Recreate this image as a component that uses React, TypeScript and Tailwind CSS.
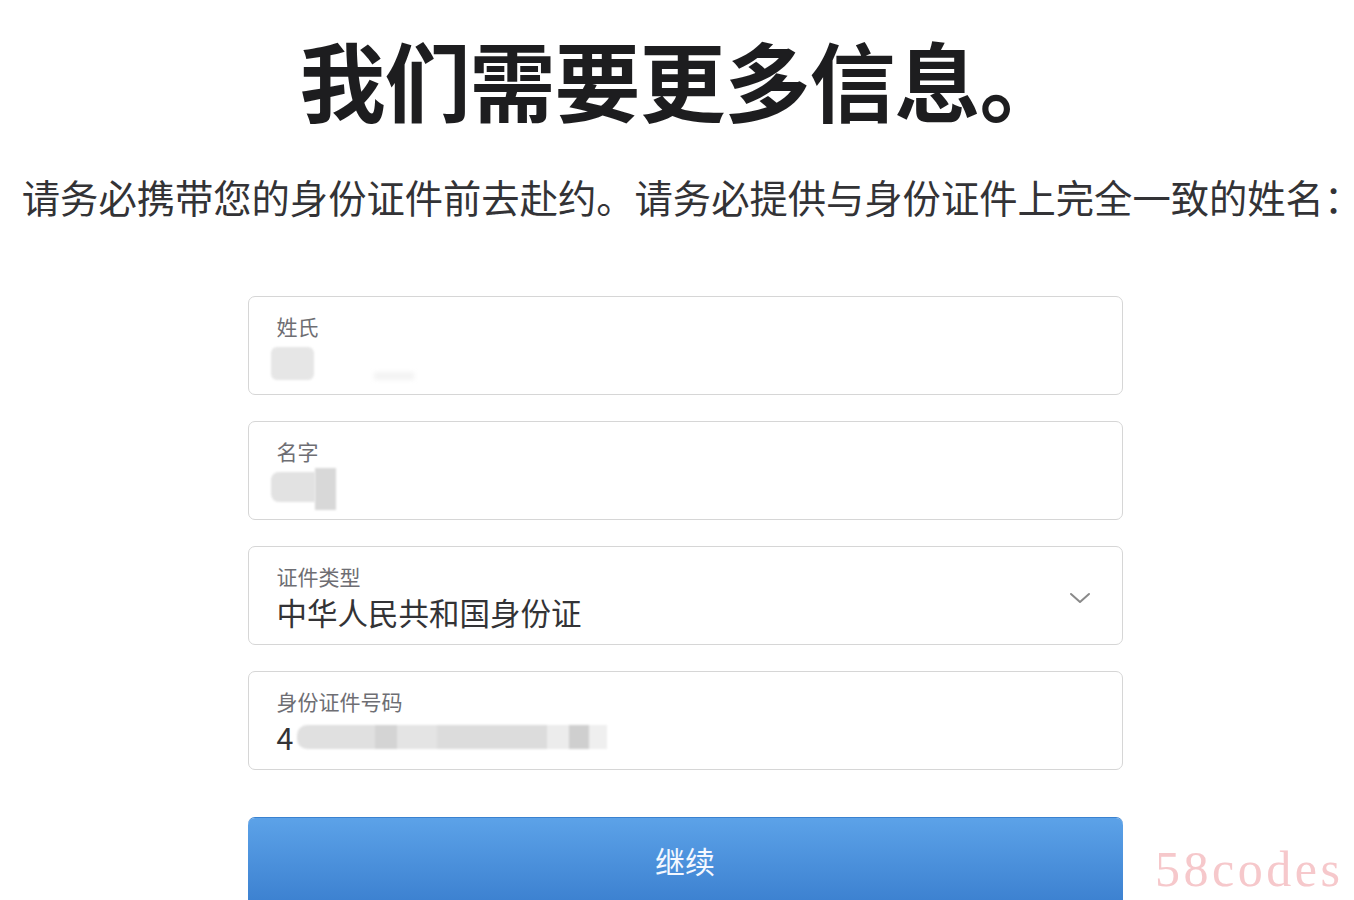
import React from "react";

const font = { fontFamily: '"Noto Sans CJK SC", "Noto Sans", sans-serif' };

function Field({ label, children, chevron }: { label: string; children?: React.ReactNode; chevron?: boolean }) {
  return (
    <div className="relative h-[99px] w-[875px] rounded-[7px] border border-[#d6d6d6] bg-white pl-[28px] pt-[14px]">
      <div className="text-[21px] leading-[30px] text-[#6e6e73]">{label}</div>
      <div className="h-[44px]">{children}</div>
      {chevron && (
        <svg className="absolute right-[31px] top-[44px]" width="22" height="14" viewBox="0 0 22 14" fill="none">
          <path d="M2 3 L11 11 L20 3" stroke="#8a8a8a" strokeWidth="2" strokeLinecap="round" strokeLinejoin="round" />
        </svg>
      )}
    </div>
  );
}

export default function App() {
  return (
    <div className="relative h-[900px] w-[1354px] overflow-hidden bg-white" style={font}>
      <div className="flex flex-col items-center">
        <h1 className="ml-[10px] mt-[25px] h-[108px] text-[86px] font-bold leading-[108px] tracking-[-1px] text-[#1d1d1f]">我们需要更多信息。</h1>
        <p className="ml-[6px] mt-[38px] whitespace-nowrap text-[38.3px] leading-[52px] text-[#333336]">
          请务必携带您的身份证件前去赴约。请务必提供与身份证件上完全一致的姓名<span className="tracking-[-24px]">：</span>
        </p>
        <div className="ml-[16px] mt-[73px] flex flex-col gap-[26px]">
          <Field label="姓氏">
            <div className="-ml-[6px] mt-[6px] flex items-end gap-[60px]">
              <div className="h-[33px] w-[43px] rounded-[6px] bg-[#e6e6e6] blur-[1px]" />
              <div className="h-[8px] w-[40px] bg-[#f3f3f3] blur-[2px]" />
            </div>
          </Field>
          <Field label="名字">
            <div className="-ml-[6px] mt-[2px] flex h-[42px] items-start">
              <div className="mt-[4px] h-[30px] w-[44px] rounded-l-[8px] bg-[#e2e2e2] blur-[1px]" />
              <div className="h-[42px] w-[21px] bg-[#d8d8d8] blur-[1px]" />
            </div>
          </Field>
          <Field label="证件类型" chevron>
            <div className="text-[30.5px] leading-[42px] text-[#333336]">中华人民共和国身份证</div>
          </Field>
          <Field label="身份证件号码">
            <div className="flex items-center">
              <span className="text-[30.5px] leading-[42px] text-[#333336]">4</span>
              <div className="ml-[4px] flex h-[24px] items-center blur-[1px]">
                <div className="h-[24px] w-[78px] rounded-l-[10px] bg-[#e0e0e0]" />
                <div className="h-[24px] w-[22px] bg-[#d4d4d4]" />
                <div className="h-[24px] w-[40px] bg-[#e4e4e4]" />
                <div className="h-[24px] w-[110px] bg-[#dcdcdc]" />
                <div className="h-[24px] w-[22px] bg-[#ececec]" />
                <div className="h-[24px] w-[20px] bg-[#cfcfcf]" />
                <div className="h-[24px] w-[18px] bg-[#efefef]" />
              </div>
            </div>
          </Field>
          <div className="mt-[22px] flex h-[120px] w-[875px] items-start justify-center rounded-[7px] bg-gradient-to-b from-[#5ca2e8] to-[#2f73c6] pt-[22px] shadow-[0_-1px_0_#3a82d0]">
            <span className="text-[30px] leading-[40px] text-[#f4f8ff]">继续</span>
          </div>
        </div>
      </div>
      <div
        className="absolute left-[1155px] top-[840px] text-[50px] leading-[58px] tracking-[3.5px] text-[#f6c8cb]"
        style={{ fontFamily: '"Liberation Serif", serif' }}
      >
        58codes
      </div>
    </div>
  );
}
